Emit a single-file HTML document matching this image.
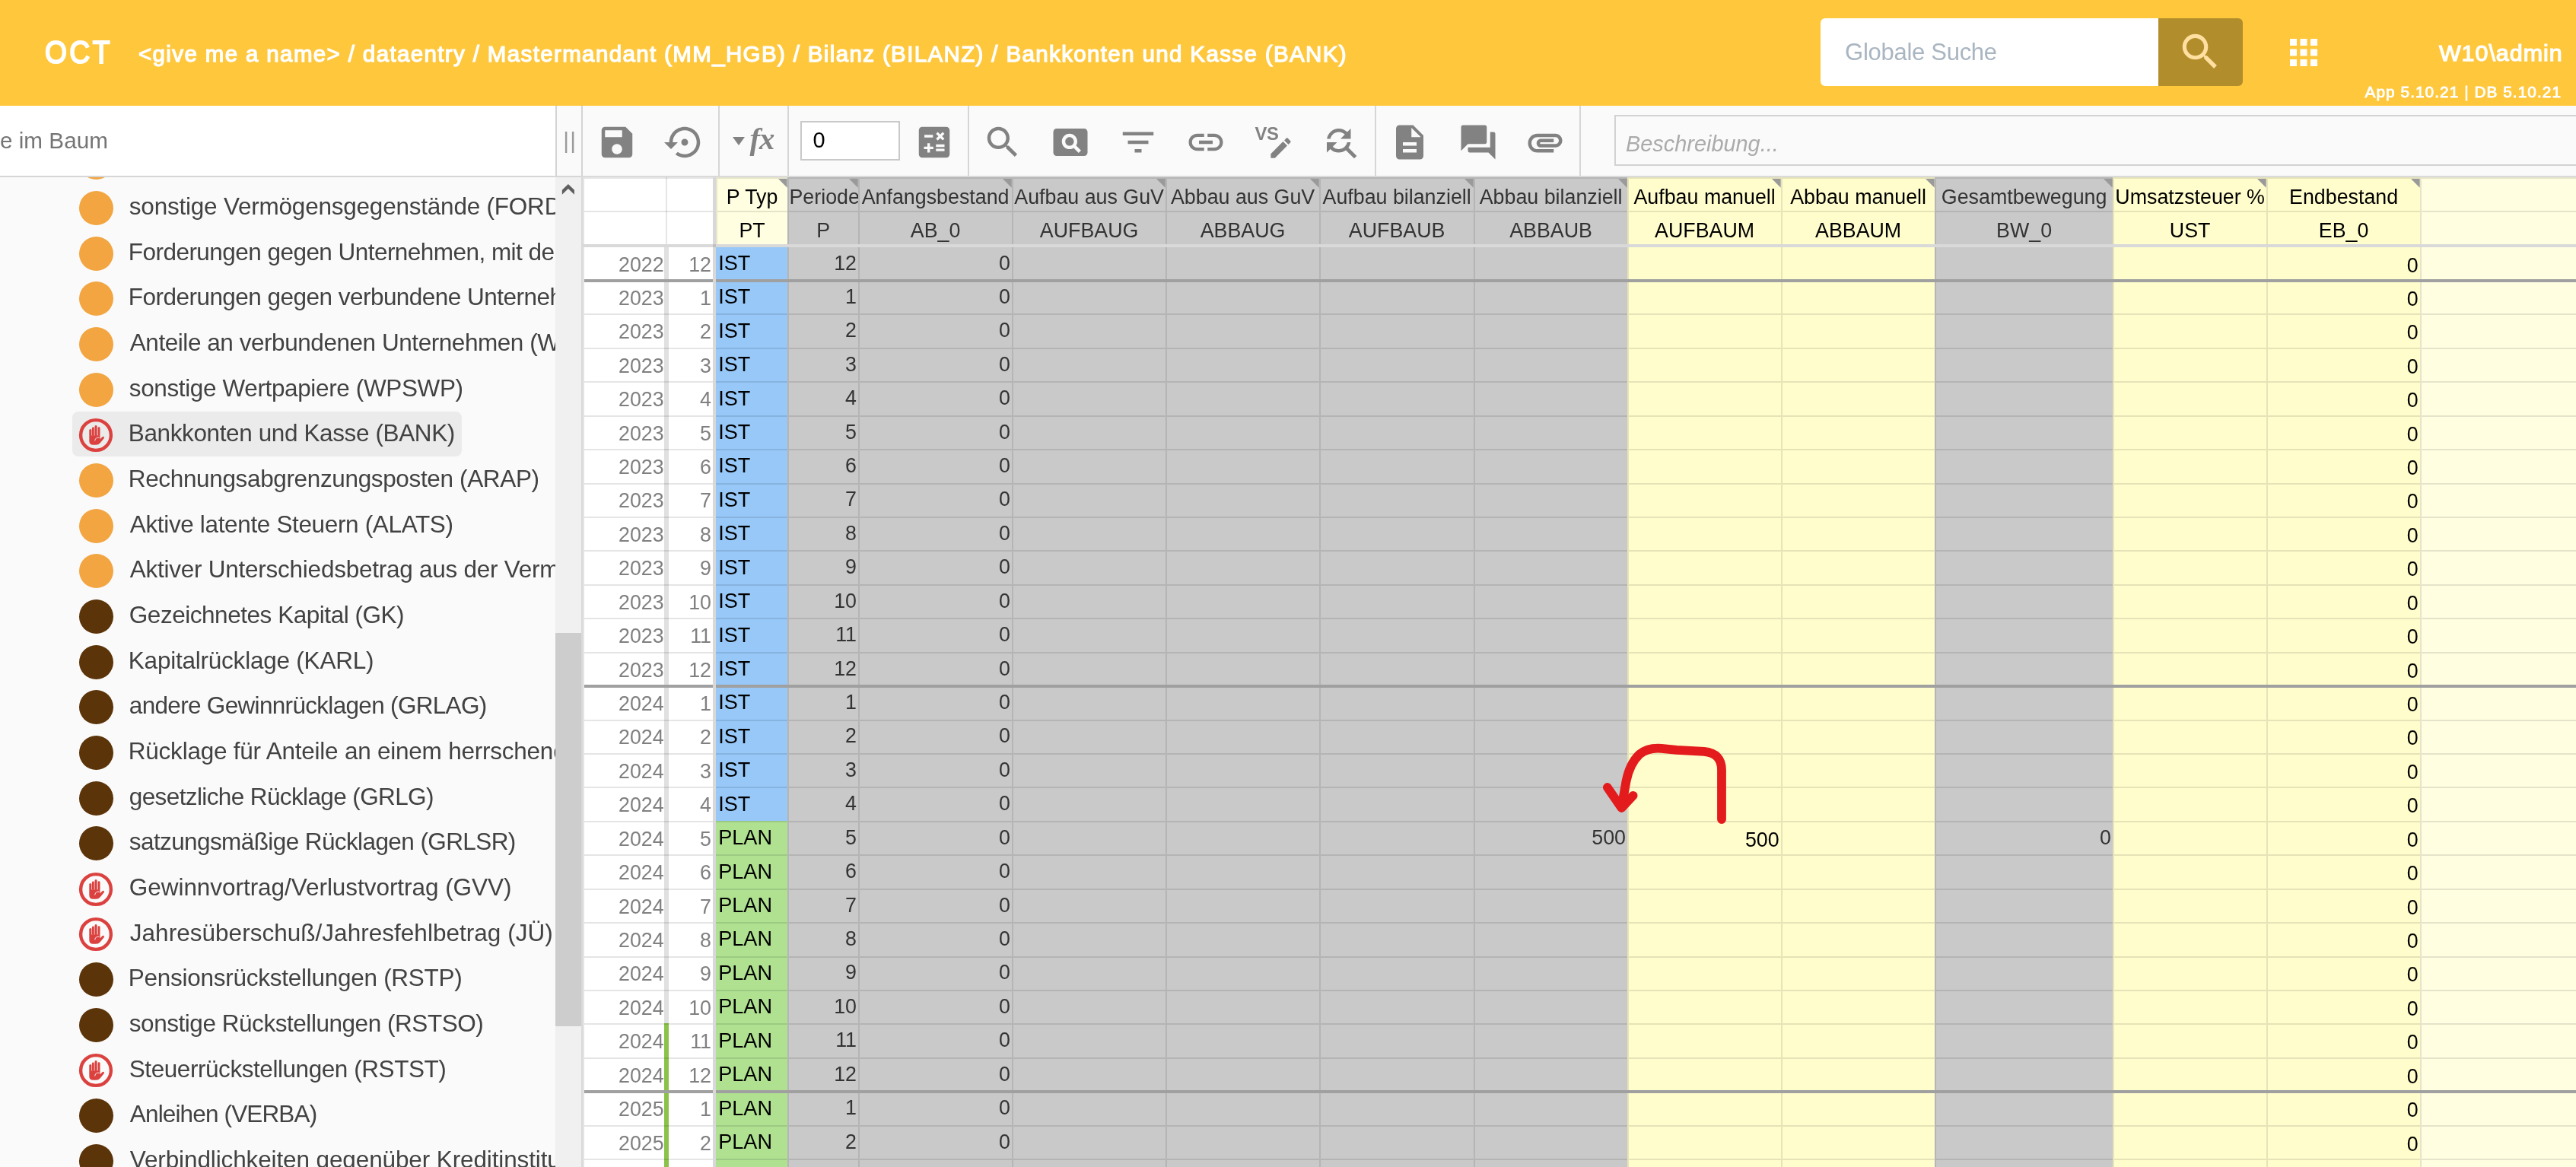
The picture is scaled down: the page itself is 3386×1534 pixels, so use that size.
<!DOCTYPE html>
<html lang="de"><head><meta charset="utf-8"><title>OCT</title>
<style>
html,body{margin:0;padding:0;}
body{width:3386px;height:1534px;overflow:hidden;position:relative;background:#FAFAFA;font-family:"Liberation Sans", sans-serif;}
.r{position:absolute;display:block;}
.t{position:absolute;white-space:nowrap;overflow:visible;}
.clip{position:absolute;overflow:hidden;}
#root{position:absolute;left:0;top:0;width:3386px;height:1534px;will-change:transform;}
</style></head><body><div id="root">
<div class="r" style="left:0.00px;top:0.00px;width:3386.00px;height:139.00px;background:#FFC73C;"></div>
<div class="t hb" style="top:40.51px;height:56px;line-height:56px;font-size:42.4px;color:#fff;letter-spacing:3.800px;left:59.00px;-webkit-text-stroke:2.1px #fff;transform:scaleX(.88);transform-origin:0 0;">OCT</div>
<div class="t hb" style="top:51.48px;height:39px;line-height:39px;font-size:29.5px;color:#fff;letter-spacing:1.365px;left:182.00px;-webkit-text-stroke:1.25px #fff;">&lt;give me a name&gt; / dataentry / Mastermandant (MM_HGB) / Bilanz (BILANZ) / Bankkonten und Kasse (BANK)</div>
<div class="r" style="left:2393.00px;top:24.00px;width:444.00px;height:89.00px;background:#fff;border-radius:6px 0 0 6px;"></div>
<div class="r" style="left:2837.00px;top:24.00px;width:111.00px;height:89.00px;background:#B28D2C;border-radius:0 6px 6px 0;"></div>
<div class="t " style="top:47.76px;height:41px;line-height:41px;font-size:31px;color:#A9B5C1;letter-spacing:-0.283px;left:2425.10px;">Globale Suche</div>
<svg class="r" style="left:2861.00px;top:36.50px" width="62" height="62" viewBox="0 0 24 24"><path fill="#FFE0A0" d="M15.5 14h-.79l-.28-.27C15.41 12.59 16 11.11 16 9.5 16 5.91 13.09 3 9.5 3S3 5.91 3 9.5 5.91 16 9.5 16c1.61 0 3.09-.59 4.23-1.57l.27.28v.79l5 4.99L20.49 19l-4.99-5zm-6 0C7.01 14 5 11.99 5 9.5S7.01 5 9.5 5 14 7.01 14 9.5 11.99 14 9.5 14z"/></svg>
<svg class="r" style="left:3001.00px;top:42.00px" width="54" height="54" viewBox="0 0 24 24"><path fill="#fff" d="M4 8h4V4H4v4zm6 12h4v-4h-4v4zm-6 0h4v-4H4v4zm0-6h4v-4H4v4zm6 0h4v-4h-4v4zm6-10v4h4V4h-4zm-6 4h4V4h-4v4zm6 6h4v-4h-4v4zm0 6h4v-4h-4v4z"/></svg>
<div class="t " style="top:49.27px;height:40px;line-height:40px;font-size:30.4px;color:#fff;letter-spacing:1.000px;right:17.40px;text-align:right;-webkit-text-stroke:1.25px #fff;">W10\admin</div>
<div class="t " style="top:107.39px;height:28px;line-height:28px;font-size:20.8px;color:#fff;letter-spacing:1.052px;right:19.00px;text-align:right;-webkit-text-stroke:0.85px #fff;">App 5.10.21 | DB 5.10.21</div>
<div class="r" style="left:0.00px;top:139.00px;width:730.00px;height:92.00px;background:#fff;"></div>
<div class="t " style="top:165.21px;height:39px;line-height:39px;font-size:29.7px;color:#757575;left:0.00px;">e im Baum</div>
<div class="r" style="left:0.00px;top:231.00px;width:730.00px;height:2.00px;background:#D6D6D6;"></div>
<div class="r" style="left:0.00px;top:233.00px;width:730.00px;height:1301.00px;background:#FAFAFA;"></div>
<div class="clip" style="left:0;top:233px;width:730px;height:1301px">
<div class="r" style="left:104.00px;top:-41.67px;width:45.00px;height:45.00px;background:#F2A541;border-radius:50%;"></div>
<div class="t tree" style="top:-41.68px;height:41px;line-height:41px;font-size:31.5px;color:#424242;letter-spacing:-0.405px;left:172.00px;"></div>
<div class="r" style="left:104.00px;top:18.00px;width:45.00px;height:45.00px;background:#F2A541;border-radius:50%;"></div>
<div class="t tree" style="top:17.99px;height:41px;line-height:41px;font-size:31.5px;color:#424242;letter-spacing:-0.220px;left:169.80px;">sonstige Vermögensgegenstände (FORDSO)</div>
<div class="r" style="left:104.00px;top:77.67px;width:45.00px;height:45.00px;background:#F2A541;border-radius:50%;"></div>
<div class="t tree" style="top:77.66px;height:41px;line-height:41px;font-size:31.5px;color:#424242;letter-spacing:-0.540px;left:168.80px;">Forderungen gegen Unternehmen, mit denen</div>
<div class="r" style="left:104.00px;top:137.34px;width:45.00px;height:45.00px;background:#F2A541;border-radius:50%;"></div>
<div class="t tree" style="top:137.33px;height:41px;line-height:41px;font-size:31.5px;color:#424242;letter-spacing:-0.530px;left:168.80px;">Forderungen gegen verbundene Unternehmen</div>
<div class="r" style="left:104.00px;top:197.01px;width:45.00px;height:45.00px;background:#F2A541;border-radius:50%;"></div>
<div class="t tree" style="top:197.00px;height:41px;line-height:41px;font-size:31.5px;color:#424242;letter-spacing:-0.450px;left:170.80px;">Anteile an verbundenen Unternehmen (WPAVU)</div>
<div class="r" style="left:104.00px;top:256.68px;width:45.00px;height:45.00px;background:#F2A541;border-radius:50%;"></div>
<div class="t tree" style="top:256.67px;height:41px;line-height:41px;font-size:31.5px;color:#424242;letter-spacing:-0.374px;left:169.80px;">sonstige Wertpapiere (WPSWP)</div>
<div class="r" style="left:95.00px;top:308.35px;width:512.00px;height:59.00px;background:#EBEBEB;border-radius:8px;"></div>
<svg class="r" style="left:102.20px;top:314.85px" width="48" height="48" viewBox="-24 -24 48 48"><circle r="19.9" fill="none" stroke="#DB423F" stroke-width="4.4"/><g fill="#DB423F"><rect x="-8.7" y="-8.0" width="3.0" height="9" rx="1.5"/><rect x="-5.1" y="-10.5" width="2.9" height="11.5" rx="1.45"/><rect x="-1.5" y="-12.9" width="3.1" height="14" rx="1.55"/><rect x="2.6" y="-10.7" width="2.9" height="11.7" rx="1.45"/><path d="M-8.7 0.2 H5.5 V5.3 L8.5 2.2 Q9.7 1.2 10.6 2.1 Q11.4 3.1 10.6 4.2 L5.7 10.2 Q3.5 12.85 0.2 12.85 H-3.6 Q-8.7 12.85 -8.7 7.6 Z"/></g><path d="M-1.3 7.1 Q-1 4 1.5 3.4 Q3 3 4.2 3.2" fill="none" stroke="#EBEBEB" stroke-width="0.9" stroke-linecap="round"/></svg>
<div class="t tree" style="top:316.34px;height:41px;line-height:41px;font-size:31.5px;color:#424242;letter-spacing:-0.384px;left:168.80px;">Bankkonten und Kasse (BANK)</div>
<div class="r" style="left:104.00px;top:376.02px;width:45.00px;height:45.00px;background:#F2A541;border-radius:50%;"></div>
<div class="t tree" style="top:376.01px;height:41px;line-height:41px;font-size:31.5px;color:#424242;letter-spacing:-0.355px;left:168.80px;">Rechnungsabgrenzungsposten (ARAP)</div>
<div class="r" style="left:104.00px;top:435.69px;width:45.00px;height:45.00px;background:#F2A541;border-radius:50%;"></div>
<div class="t tree" style="top:435.68px;height:41px;line-height:41px;font-size:31.5px;color:#424242;letter-spacing:-0.351px;left:170.80px;">Aktive latente Steuern (ALATS)</div>
<div class="r" style="left:104.00px;top:495.36px;width:45.00px;height:45.00px;background:#F2A541;border-radius:50%;"></div>
<div class="t tree" style="top:495.35px;height:41px;line-height:41px;font-size:31.5px;color:#424242;letter-spacing:-0.250px;left:170.80px;">Aktiver Unterschiedsbetrag aus der Vermögensverrechnung</div>
<div class="r" style="left:104.00px;top:555.03px;width:45.00px;height:45.00px;background:#5B3409;border-radius:50%;"></div>
<div class="t tree" style="top:555.02px;height:41px;line-height:41px;font-size:31.5px;color:#424242;letter-spacing:-0.463px;left:169.80px;">Gezeichnetes Kapital (GK)</div>
<div class="r" style="left:104.00px;top:614.70px;width:45.00px;height:45.00px;background:#5B3409;border-radius:50%;"></div>
<div class="t tree" style="top:614.69px;height:41px;line-height:41px;font-size:31.5px;color:#424242;letter-spacing:-0.225px;left:168.80px;">Kapitalrücklage (KARL)</div>
<div class="r" style="left:104.00px;top:674.37px;width:45.00px;height:45.00px;background:#5B3409;border-radius:50%;"></div>
<div class="t tree" style="top:674.36px;height:41px;line-height:41px;font-size:31.5px;color:#424242;letter-spacing:-0.682px;left:169.80px;">andere Gewinnrücklagen (GRLAG)</div>
<div class="r" style="left:104.00px;top:734.04px;width:45.00px;height:45.00px;background:#5B3409;border-radius:50%;"></div>
<div class="t tree" style="top:734.03px;height:41px;line-height:41px;font-size:31.5px;color:#424242;letter-spacing:-0.230px;left:168.80px;">Rücklage für Anteile an einem herrschenden</div>
<div class="r" style="left:104.00px;top:793.71px;width:45.00px;height:45.00px;background:#5B3409;border-radius:50%;"></div>
<div class="t tree" style="top:793.70px;height:41px;line-height:41px;font-size:31.5px;color:#424242;letter-spacing:-0.615px;left:169.80px;">gesetzliche Rücklage (GRLG)</div>
<div class="r" style="left:104.00px;top:853.38px;width:45.00px;height:45.00px;background:#5B3409;border-radius:50%;"></div>
<div class="t tree" style="top:853.37px;height:41px;line-height:41px;font-size:31.5px;color:#424242;letter-spacing:-0.595px;left:169.80px;">satzungsmäßige Rücklagen (GRLSR)</div>
<svg class="r" style="left:102.20px;top:911.55px" width="48" height="48" viewBox="-24 -24 48 48"><circle r="19.9" fill="none" stroke="#DB423F" stroke-width="4.4"/><g fill="#DB423F"><rect x="-8.7" y="-8.0" width="3.0" height="9" rx="1.5"/><rect x="-5.1" y="-10.5" width="2.9" height="11.5" rx="1.45"/><rect x="-1.5" y="-12.9" width="3.1" height="14" rx="1.55"/><rect x="2.6" y="-10.7" width="2.9" height="11.7" rx="1.45"/><path d="M-8.7 0.2 H5.5 V5.3 L8.5 2.2 Q9.7 1.2 10.6 2.1 Q11.4 3.1 10.6 4.2 L5.7 10.2 Q3.5 12.85 0.2 12.85 H-3.6 Q-8.7 12.85 -8.7 7.6 Z"/></g><path d="M-1.3 7.1 Q-1 4 1.5 3.4 Q3 3 4.2 3.2" fill="none" stroke="#FAFAFA" stroke-width="0.9" stroke-linecap="round"/></svg>
<div class="t tree" style="top:913.04px;height:41px;line-height:41px;font-size:31.5px;color:#424242;letter-spacing:-0.045px;left:169.80px;">Gewinnvortrag/Verlustvortrag (GVV)</div>
<svg class="r" style="left:102.20px;top:971.22px" width="48" height="48" viewBox="-24 -24 48 48"><circle r="19.9" fill="none" stroke="#DB423F" stroke-width="4.4"/><g fill="#DB423F"><rect x="-8.7" y="-8.0" width="3.0" height="9" rx="1.5"/><rect x="-5.1" y="-10.5" width="2.9" height="11.5" rx="1.45"/><rect x="-1.5" y="-12.9" width="3.1" height="14" rx="1.55"/><rect x="2.6" y="-10.7" width="2.9" height="11.7" rx="1.45"/><path d="M-8.7 0.2 H5.5 V5.3 L8.5 2.2 Q9.7 1.2 10.6 2.1 Q11.4 3.1 10.6 4.2 L5.7 10.2 Q3.5 12.85 0.2 12.85 H-3.6 Q-8.7 12.85 -8.7 7.6 Z"/></g><path d="M-1.3 7.1 Q-1 4 1.5 3.4 Q3 3 4.2 3.2" fill="none" stroke="#FAFAFA" stroke-width="0.9" stroke-linecap="round"/></svg>
<div class="t tree" style="top:972.71px;height:41px;line-height:41px;font-size:31.5px;color:#424242;letter-spacing:0.026px;left:170.80px;">Jahresüberschuß/Jahresfehlbetrag (JÜ)</div>
<div class="r" style="left:104.00px;top:1032.39px;width:45.00px;height:45.00px;background:#5B3409;border-radius:50%;"></div>
<div class="t tree" style="top:1032.38px;height:41px;line-height:41px;font-size:31.5px;color:#424242;letter-spacing:-0.266px;left:168.80px;">Pensionsrückstellungen (RSTP)</div>
<div class="r" style="left:104.00px;top:1092.06px;width:45.00px;height:45.00px;background:#5B3409;border-radius:50%;"></div>
<div class="t tree" style="top:1092.05px;height:41px;line-height:41px;font-size:31.5px;color:#424242;letter-spacing:-0.457px;left:169.80px;">sonstige Rückstellungen (RSTSO)</div>
<svg class="r" style="left:102.20px;top:1150.23px" width="48" height="48" viewBox="-24 -24 48 48"><circle r="19.9" fill="none" stroke="#DB423F" stroke-width="4.4"/><g fill="#DB423F"><rect x="-8.7" y="-8.0" width="3.0" height="9" rx="1.5"/><rect x="-5.1" y="-10.5" width="2.9" height="11.5" rx="1.45"/><rect x="-1.5" y="-12.9" width="3.1" height="14" rx="1.55"/><rect x="2.6" y="-10.7" width="2.9" height="11.7" rx="1.45"/><path d="M-8.7 0.2 H5.5 V5.3 L8.5 2.2 Q9.7 1.2 10.6 2.1 Q11.4 3.1 10.6 4.2 L5.7 10.2 Q3.5 12.85 0.2 12.85 H-3.6 Q-8.7 12.85 -8.7 7.6 Z"/></g><path d="M-1.3 7.1 Q-1 4 1.5 3.4 Q3 3 4.2 3.2" fill="none" stroke="#FAFAFA" stroke-width="0.9" stroke-linecap="round"/></svg>
<div class="t tree" style="top:1151.72px;height:41px;line-height:41px;font-size:31.5px;color:#424242;letter-spacing:-0.441px;left:169.80px;">Steuerrückstellungen (RSTST)</div>
<div class="r" style="left:104.00px;top:1211.40px;width:45.00px;height:45.00px;background:#5B3409;border-radius:50%;"></div>
<div class="t tree" style="top:1211.39px;height:41px;line-height:41px;font-size:31.5px;color:#424242;letter-spacing:-0.850px;left:170.80px;">Anleihen (VERBA)</div>
<div class="r" style="left:104.00px;top:1271.07px;width:45.00px;height:45.00px;background:#5B3409;border-radius:50%;"></div>
<div class="t tree" style="top:1271.06px;height:41px;line-height:41px;font-size:31.5px;color:#424242;letter-spacing:-0.120px;left:170.80px;">Verbindlichkeiten gegenüber Kreditinstituten</div>
</div>
<div class="r" style="left:730.00px;top:139.00px;width:2.00px;height:92.00px;background:#D4D4D4;"></div>
<div class="r" style="left:732.00px;top:139.00px;width:32.00px;height:92.00px;background:#FAFAFA;"></div>
<div class="t" style="left:740.2px;top:160.4px;font-size:29.8px;line-height:50px;height:50px;color:#9A9A9A;letter-spacing:1.3px">||</div>
<div class="r" style="left:730.00px;top:233.00px;width:34.00px;height:1301.00px;background:#F0F0F0;"></div>
<div class="r" style="left:730.00px;top:832.00px;width:34.00px;height:517.00px;background:#CDCDCD;"></div>
<svg class="r" style="left:730px;top:233px" width="34" height="34" viewBox="730 233 34 34"><path d="M738.85 249.85 L746.9 241.9 L754.9 249.85 V255.85 L746.9 247.9 L738.85 255.85Z" fill="#5E5E5E"/></svg>
<div class="r" style="left:764.00px;top:139.00px;width:2.00px;height:92.00px;background:#D4D4D4;"></div>
<div class="r" style="left:730.00px;top:231.00px;width:36.00px;height:2.00px;background:#D6D6D6;"></div>
<div class="r" style="left:764.00px;top:233.00px;width:2.00px;height:1301.00px;background:#D9D9D9;"></div>
<div class="r" style="left:766.00px;top:233.00px;width:2.00px;height:1301.00px;background:#E4E4E4;"></div>
<div class="r" style="left:766.00px;top:139.00px;width:2620.00px;height:92.00px;background:#FAFAFA;"></div>
<div class="r" style="left:943.70px;top:139.00px;width:2.00px;height:92.00px;background:#D6D6D6;"></div>
<div class="r" style="left:1034.80px;top:139.00px;width:2.00px;height:92.00px;background:#D6D6D6;"></div>
<div class="r" style="left:1271.70px;top:139.00px;width:2.00px;height:92.00px;background:#D6D6D6;"></div>
<div class="r" style="left:1806.70px;top:139.00px;width:2.00px;height:92.00px;background:#D6D6D6;"></div>
<div class="r" style="left:2076.10px;top:139.00px;width:2.00px;height:92.00px;background:#D6D6D6;"></div>
<svg class="r" style="left:783.50px;top:160.00px" width="54" height="54" viewBox="0 0 24 24"><path fill="#828282" d="M17 3H5c-1.11 0-2 .9-2 2v14c0 1.1.89 2 2 2h14c1.1 0 2-.9 2-2V7l-4-4zm-5 16c-1.66 0-3-1.34-3-3s1.34-3 3-3 3 1.34 3 3-1.34 3-3 3zm3-10H5V5h10v4z"/></svg>
<svg class="r" style="left:873.40px;top:160.00px" width="54" height="54" viewBox="0 0 24 24"><path fill="#828282" d="M14 12c0-1.1-.9-2-2-2s-2 .9-2 2 .9 2 2 2 2-.9 2-2zm-2-9c-4.97 0-9 4.03-9 9H0l4 4 4-4H5c0-3.87 3.13-7 7-7s7 3.13 7 7-3.13 7-7 7c-1.51 0-2.91-.49-4.06-1.3l-1.42 1.44C8.04 20.3 9.94 21 12 21c4.97 0 9-4.03 9-9s-4.03-9-9-9z"/></svg>
<svg class="r" style="left:962.9px;top:180px" width="16" height="11" viewBox="0 0 16 11"><path d="M0 0H16L8 11Z" fill="#828282"/></svg>
<div class="t fx" style="top:156.06px;height:53px;line-height:53px;font-size:40.7px;color:#828282;font-weight:700;font-style:italic;letter-spacing:-1.000px;font-family:'Liberation Serif',serif;left:985.50px;">fx</div>
<div class="r" style="left:1052.00px;top:159.00px;width:131.00px;height:52.00px;background:#fff;box-sizing:border-box;border:2px solid #C9C9C9;"></div>
<div class="t " style="top:165.45px;height:38px;line-height:38px;font-size:29px;color:#000;left:1068.50px;">0</div>
<svg class="r" style="left:1200.50px;top:160.00px" width="54" height="54" viewBox="0 0 24 24"><path fill="#828282" d="M19 3H5c-1.1 0-2 .9-2 2v14c0 1.1.9 2 2 2h14c1.1 0 2-.9 2-2V5c0-1.1-.9-2-2-2zm-5.97 4.06L14.09 6l1.41 1.41L16.91 6l1.06 1.06-1.41 1.41 1.41 1.41-1.06 1.06-1.41-1.4-1.41 1.41-1.06-1.06 1.41-1.41-1.41-1.42zm-6.78.66h5v1.5h-5v-1.5zM11.5 16h-2v2H8v-2H6v-1.5h2v-2h1.5v2h2V16zm6.5 1.25h-5v-1.5h5v1.5zm0-2.5h-5v-1.5h5v1.5z"/></svg>
<svg class="r" style="left:1291.00px;top:160.00px" width="54" height="54" viewBox="0 0 24 24"><path fill="#828282" d="M15.5 14h-.79l-.28-.27C15.41 12.59 16 11.11 16 9.5 16 5.91 13.09 3 9.5 3S3 5.91 3 9.5 5.91 16 9.5 16c1.61 0 3.09-.59 4.23-1.57l.27.28v.79l5 4.99L20.49 19l-4.99-5zm-6 0C7.01 14 5 11.99 5 9.5S7.01 5 9.5 5 14 7.01 14 9.5 11.99 14 9.5 14z"/></svg>
<svg class="r" style="left:1380.00px;top:160.00px" width="54" height="54" viewBox="0 0 24 24"><path fill="#828282" d="M11.5 9C10.12 9 9 10.12 9 11.5s1.12 2.5 2.5 2.5 2.5-1.12 2.5-2.5S12.88 9 11.5 9zM20 4H4c-1.1 0-2 .9-2 2v12c0 1.1.9 2 2 2h16c1.1 0 2-.9 2-2V6c0-1.1-.9-2-2-2zm-3.21 14.21l-2.91-2.91c-.69.44-1.51.7-2.39.7C9.01 16 7 13.99 7 11.5S9.01 7 11.5 7 16 9.01 16 11.5c0 .88-.26 1.69-.7 2.39l2.91 2.9-1.42 1.42z"/></svg>
<svg class="r" style="left:1469.00px;top:160.00px" width="54" height="54" viewBox="0 0 24 24"><path fill="#828282" d="M10 18h4v-2h-4v2zM3 6v2h18V6H3zm3 7h12v-2H6v2z"/></svg>
<svg class="r" style="left:1557.50px;top:160.00px" width="54" height="54" viewBox="0 0 24 24"><path fill="#828282" d="M3.9 12c0-1.71 1.39-3.1 3.1-3.1h4V7H7c-2.76 0-5 2.24-5 5s2.24 5 5 5h4v-1.9H7c-1.71 0-3.1-1.39-3.1-3.1zM8 13h8v-2H8v2zm9-6h-4v1.9h4c1.71 0 3.1 1.39 3.1 3.1s-1.39 3.1-3.1 3.1h-4V17h4c2.76 0 5-2.24 5-5s-2.24-5-5-5z"/></svg>
<div class="t vs" style="top:160.05px;height:31px;line-height:31px;font-size:23.8px;color:#828282;font-weight:700;letter-spacing:-0.200px;left:1649.40px;">VS</div>
<svg class="r" style="left:1665.50px;top:176.70px" width="35" height="35" viewBox="0 0 24 24"><path fill="#828282" d="M3 17.25V21h3.75L17.81 9.94l-3.75-3.75L3 17.25zM20.71 7.04c.39-.39.39-1.02 0-1.41l-2.34-2.34c-.39-.39-1.02-.39-1.41 0l-1.83 1.83 3.75 3.75 1.83-1.83z"/></svg>
<svg class="r" style="left:1735.30px;top:159.70px" width="54" height="54" viewBox="0 0 24 24"><path fill="#828282" d="M11 6c1.38 0 2.63.56 3.54 1.46L12 10h6V4l-2.05 2.05C14.68 4.78 12.93 4 11 4c-3.53 0-6.43 2.61-6.92 6H6.1c.46-2.28 2.48-4 4.9-4zm5.64 9.14c.66-.9 1.12-1.97 1.28-3.14H15.9c-.46 2.28-2.48 4-4.9 4-1.38 0-2.63-.56-3.54-1.46L10 12H4v6l2.05-2.05C7.32 17.22 9.07 18 11 18c1.55 0 2.98-.51 4.14-1.36L20 21.49 21.49 20l-4.85-4.86z"/></svg>
<svg class="r" style="left:1826.40px;top:160.00px" width="54" height="54" viewBox="0 0 24 24"><path fill="#828282" d="M14 2H6c-1.1 0-1.99.9-1.99 2L4 20c0 1.1.89 2 1.99 2H18c1.1 0 2-.9 2-2V8l-6-6zm2 16H8v-2h8v2zm0-4H8v-2h8v2zm-3-5V3.5L18.5 9H13z"/></svg>
<svg class="r" style="left:1915.60px;top:160.00px" width="54" height="54" viewBox="0 0 24 24"><path fill="#828282" d="M21 6h-2v9H6v2c0 .55.45 1 1 1h11l4 4V7c0-.55-.45-1-1-1zm-4 6V3c0-.55-.45-1-1-1H3c-.55 0-1 .45-1 1v14l4-4h10c.55 0 1-.45 1-1z"/></svg>
<svg class="r" style="left:2004.40px;top:159.80px" width="54" height="54" viewBox="0 0 24 24"><path fill="#828282" d="M2 12.5C2 9.46 4.46 7 7.5 7H18c2.21 0 4 1.79 4 4s-1.79 4-4 4H9.5C8.12 15 7 13.88 7 12.5S8.12 10 9.5 10H17v2H9.41c-.55 0-.55 1 0 1H18c1.1 0 2-.9 2-2s-.9-2-2-2H7.5C5.57 9 4 10.57 4 12.5S5.57 16 7.5 16H17v2H7.5C4.46 18 2 15.54 2 12.5z"/></svg>
<div class="r" style="left:2122.00px;top:151.00px;width:1274.00px;height:67.00px;background:#FAFAFA;box-sizing:border-box;border:2px solid #D2D2D2;"></div>
<div class="t besch" style="top:169.59px;height:38px;line-height:38px;font-size:28.9px;color:#ABABAB;font-style:italic;letter-spacing:0.000px;left:2137.00px;">Beschreibung...</div>
<div class="r" style="left:768.00px;top:231.00px;width:2618.00px;height:1303.00px;background:#fff;"></div>
<div class="r" style="left:764.00px;top:231.00px;width:2622.00px;height:2.00px;background:#DADADA;"></div>
<div class="r" style="left:941.00px;top:233.00px;width:94.00px;height:88.00px;background:#FFFEE1;"></div>
<div class="r" style="left:1035.00px;top:233.00px;width:93.00px;height:88.00px;background:#C9C9C9;"></div>
<div class="r" style="left:1128.00px;top:233.00px;width:202.00px;height:88.00px;background:#C9C9C9;"></div>
<div class="r" style="left:1330.00px;top:233.00px;width:202.00px;height:88.00px;background:#C9C9C9;"></div>
<div class="r" style="left:1532.00px;top:233.00px;width:202.00px;height:88.00px;background:#C9C9C9;"></div>
<div class="r" style="left:1734.00px;top:233.00px;width:203.00px;height:88.00px;background:#C9C9C9;"></div>
<div class="r" style="left:1937.00px;top:233.00px;width:202.00px;height:88.00px;background:#C9C9C9;"></div>
<div class="r" style="left:2139.00px;top:233.00px;width:202.00px;height:88.00px;background:#FFFDCC;"></div>
<div class="r" style="left:2341.00px;top:233.00px;width:202.00px;height:88.00px;background:#FFFDCC;"></div>
<div class="r" style="left:2543.00px;top:233.00px;width:234.00px;height:88.00px;background:#C9C9C9;"></div>
<div class="r" style="left:2777.00px;top:233.00px;width:202.00px;height:88.00px;background:#FFFDCC;"></div>
<div class="r" style="left:2979.00px;top:233.00px;width:202.00px;height:88.00px;background:#FFFDCC;"></div>
<div class="r" style="left:3181.00px;top:233.00px;width:205.00px;height:88.00px;background:#FFFEE1;"></div>
<div class="r" style="left:941.00px;top:325.00px;width:94.00px;height:754.00px;background:#97C8F8;"></div>
<div class="r" style="left:941.00px;top:1079.00px;width:94.00px;height:455.00px;background:#AFE191;"></div>
<div class="r" style="left:1035.00px;top:325.00px;width:93.00px;height:1209.00px;background:#C9C9C9;"></div>
<div class="r" style="left:1128.00px;top:325.00px;width:202.00px;height:1209.00px;background:#C9C9C9;"></div>
<div class="r" style="left:1330.00px;top:325.00px;width:202.00px;height:1209.00px;background:#C9C9C9;"></div>
<div class="r" style="left:1532.00px;top:325.00px;width:202.00px;height:1209.00px;background:#C9C9C9;"></div>
<div class="r" style="left:1734.00px;top:325.00px;width:203.00px;height:1209.00px;background:#C9C9C9;"></div>
<div class="r" style="left:1937.00px;top:325.00px;width:202.00px;height:1209.00px;background:#C9C9C9;"></div>
<div class="r" style="left:2139.00px;top:325.00px;width:202.00px;height:1209.00px;background:#FFFDCC;"></div>
<div class="r" style="left:2341.00px;top:325.00px;width:202.00px;height:1209.00px;background:#FFFDCC;"></div>
<div class="r" style="left:2543.00px;top:325.00px;width:234.00px;height:1209.00px;background:#C9C9C9;"></div>
<div class="r" style="left:2777.00px;top:325.00px;width:202.00px;height:1209.00px;background:#FFFDCC;"></div>
<div class="r" style="left:2979.00px;top:325.00px;width:202.00px;height:1209.00px;background:#FFFDCC;"></div>
<div class="r" style="left:3181.00px;top:325.00px;width:205.00px;height:1209.00px;background:#FFFEE1;"></div>
<div class="r" style="left:875.00px;top:233.00px;width:2.00px;height:88.00px;background:#E6E6E6;"></div>
<div class="r" style="left:873.00px;top:325.00px;width:6.00px;height:1209.00px;background:#E0E0E0;"></div>
<div class="r" style="left:873.00px;top:1345.00px;width:6.00px;height:189.00px;background:#8BC34A;"></div>
<div class="r" style="left:768.00px;top:233.00px;width:2618.00px;height:2.00px;background:rgba(0,0,0,0.1);"></div>
<div class="r" style="left:768.00px;top:277.00px;width:2618.00px;height:2.00px;background:rgba(0,0,0,0.1);"></div>
<div class="r" style="left:768.00px;top:412.00px;width:2618.00px;height:2.00px;background:rgba(0,0,0,0.1);"></div>
<div class="r" style="left:768.00px;top:457.00px;width:2618.00px;height:2.00px;background:rgba(0,0,0,0.1);"></div>
<div class="r" style="left:768.00px;top:501.00px;width:2618.00px;height:2.00px;background:rgba(0,0,0,0.1);"></div>
<div class="r" style="left:768.00px;top:546.00px;width:2618.00px;height:2.00px;background:rgba(0,0,0,0.1);"></div>
<div class="r" style="left:768.00px;top:590.00px;width:2618.00px;height:2.00px;background:rgba(0,0,0,0.1);"></div>
<div class="r" style="left:768.00px;top:635.00px;width:2618.00px;height:2.00px;background:rgba(0,0,0,0.1);"></div>
<div class="r" style="left:768.00px;top:679.00px;width:2618.00px;height:2.00px;background:rgba(0,0,0,0.1);"></div>
<div class="r" style="left:768.00px;top:723.00px;width:2618.00px;height:2.00px;background:rgba(0,0,0,0.1);"></div>
<div class="r" style="left:768.00px;top:768.00px;width:2618.00px;height:2.00px;background:rgba(0,0,0,0.1);"></div>
<div class="r" style="left:768.00px;top:812.00px;width:2618.00px;height:2.00px;background:rgba(0,0,0,0.1);"></div>
<div class="r" style="left:768.00px;top:857.00px;width:2618.00px;height:2.00px;background:rgba(0,0,0,0.1);"></div>
<div class="r" style="left:768.00px;top:946.00px;width:2618.00px;height:2.00px;background:rgba(0,0,0,0.1);"></div>
<div class="r" style="left:768.00px;top:990.00px;width:2618.00px;height:2.00px;background:rgba(0,0,0,0.1);"></div>
<div class="r" style="left:768.00px;top:1034.00px;width:2618.00px;height:2.00px;background:rgba(0,0,0,0.1);"></div>
<div class="r" style="left:768.00px;top:1079.00px;width:2618.00px;height:2.00px;background:rgba(0,0,0,0.1);"></div>
<div class="r" style="left:768.00px;top:1123.00px;width:2618.00px;height:2.00px;background:rgba(0,0,0,0.1);"></div>
<div class="r" style="left:768.00px;top:1168.00px;width:2618.00px;height:2.00px;background:rgba(0,0,0,0.1);"></div>
<div class="r" style="left:768.00px;top:1212.00px;width:2618.00px;height:2.00px;background:rgba(0,0,0,0.1);"></div>
<div class="r" style="left:768.00px;top:1257.00px;width:2618.00px;height:2.00px;background:rgba(0,0,0,0.1);"></div>
<div class="r" style="left:768.00px;top:1301.00px;width:2618.00px;height:2.00px;background:rgba(0,0,0,0.1);"></div>
<div class="r" style="left:768.00px;top:1345.00px;width:2618.00px;height:2.00px;background:rgba(0,0,0,0.1);"></div>
<div class="r" style="left:768.00px;top:1390.00px;width:2618.00px;height:2.00px;background:rgba(0,0,0,0.1);"></div>
<div class="r" style="left:768.00px;top:1479.00px;width:2618.00px;height:2.00px;background:rgba(0,0,0,0.1);"></div>
<div class="r" style="left:768.00px;top:1523.00px;width:2618.00px;height:2.00px;background:rgba(0,0,0,0.1);"></div>
<div class="r" style="left:768.00px;top:1568.00px;width:2618.00px;height:2.00px;background:rgba(0,0,0,0.1);"></div>
<div class="r" style="left:1035.00px;top:233.00px;width:2.00px;height:1301.00px;background:#B5B5B5;"></div>
<div class="r" style="left:1128.00px;top:233.00px;width:2.00px;height:1301.00px;background:#B5B5B5;"></div>
<div class="r" style="left:1330.00px;top:233.00px;width:2.00px;height:1301.00px;background:#B5B5B5;"></div>
<div class="r" style="left:1532.00px;top:233.00px;width:2.00px;height:1301.00px;background:#B5B5B5;"></div>
<div class="r" style="left:1734.00px;top:233.00px;width:2.00px;height:1301.00px;background:#B5B5B5;"></div>
<div class="r" style="left:1937.00px;top:233.00px;width:2.00px;height:1301.00px;background:#B5B5B5;"></div>
<div class="r" style="left:2139.00px;top:233.00px;width:2.00px;height:1301.00px;background:#E6E4B8;"></div>
<div class="r" style="left:2341.00px;top:233.00px;width:2.00px;height:1301.00px;background:#E6E4B8;"></div>
<div class="r" style="left:2543.00px;top:233.00px;width:2.00px;height:1301.00px;background:#B5B5B5;"></div>
<div class="r" style="left:2777.00px;top:233.00px;width:2.00px;height:1301.00px;background:#E6E4B8;"></div>
<div class="r" style="left:2979.00px;top:233.00px;width:2.00px;height:1301.00px;background:#E6E4B8;"></div>
<div class="r" style="left:3181.00px;top:233.00px;width:2.00px;height:1301.00px;background:#E6E5CA;"></div>
<div class="r" style="left:941.00px;top:233.00px;width:2.00px;height:88.00px;background:#E6E5CA;"></div>
<div class="r" style="left:764.00px;top:321.00px;width:2622.00px;height:4.00px;background:#D9D9D9;"></div>
<div class="r" style="left:768.00px;top:367.00px;width:2618.00px;height:4.00px;background:#A0A0A0;"></div>
<div class="r" style="left:768.00px;top:1433.00px;width:2618.00px;height:4.00px;background:#A0A0A0;"></div>
<div class="r" style="left:768.00px;top:900.00px;width:2618.00px;height:4.00px;background:#A0A0A0;"></div>
<div class="r" style="left:937.00px;top:233.00px;width:4.00px;height:1301.00px;background:#D8D8D8;"></div>
<div class="r" style="left:937.00px;top:321.00px;width:4.00px;height:4.00px;background:#C0C0C0;"></div>
<svg class="r" style="left:1023.3px;top:235px" width="11.7" height="11.7" viewBox="0 0 12 12"><path d="M0 0H12V12Z" fill="#9A9A9A"/></svg>
<svg class="r" style="left:1116.3px;top:235px" width="11.7" height="11.7" viewBox="0 0 12 12"><path d="M0 0H12V12Z" fill="#9A9A9A"/></svg>
<svg class="r" style="left:1318.3px;top:235px" width="11.7" height="11.7" viewBox="0 0 12 12"><path d="M0 0H12V12Z" fill="#9A9A9A"/></svg>
<svg class="r" style="left:1520.3px;top:235px" width="11.7" height="11.7" viewBox="0 0 12 12"><path d="M0 0H12V12Z" fill="#9A9A9A"/></svg>
<svg class="r" style="left:1722.3px;top:235px" width="11.7" height="11.7" viewBox="0 0 12 12"><path d="M0 0H12V12Z" fill="#9A9A9A"/></svg>
<svg class="r" style="left:1925.3px;top:235px" width="11.7" height="11.7" viewBox="0 0 12 12"><path d="M0 0H12V12Z" fill="#9A9A9A"/></svg>
<svg class="r" style="left:2127.3px;top:235px" width="11.7" height="11.7" viewBox="0 0 12 12"><path d="M0 0H12V12Z" fill="#9A9A9A"/></svg>
<svg class="r" style="left:2329.3px;top:235px" width="11.7" height="11.7" viewBox="0 0 12 12"><path d="M0 0H12V12Z" fill="#9A9A9A"/></svg>
<svg class="r" style="left:2531.3px;top:235px" width="11.7" height="11.7" viewBox="0 0 12 12"><path d="M0 0H12V12Z" fill="#9A9A9A"/></svg>
<svg class="r" style="left:2765.3px;top:235px" width="11.7" height="11.7" viewBox="0 0 12 12"><path d="M0 0H12V12Z" fill="#9A9A9A"/></svg>
<svg class="r" style="left:2967.3px;top:235px" width="11.7" height="11.7" viewBox="0 0 12 12"><path d="M0 0H12V12Z" fill="#9A9A9A"/></svg>
<svg class="r" style="left:3169.3px;top:235px" width="11.7" height="11.7" viewBox="0 0 12 12"><path d="M0 0H12V12Z" fill="#9A9A9A"/></svg>
<div class="clip" style="left:943px;top:233px;width:92px;height:88px">
<div class="t hd" style="left:-100.4px;width:292px;text-align:center;top:8.71px;height:34px;line-height:34px;font-size:26.8px;color:#000">P Typ</div>
<div class="t hd" style="left:-100.4px;width:292px;text-align:center;top:52.56px;height:34px;line-height:34px;font-size:26.8px;color:#000">PT</div>
</div>
<div class="clip" style="left:1037px;top:233px;width:91px;height:88px">
<div class="t hd" style="left:0.5px;top:8.71px;height:34px;line-height:34px;font-size:26.8px;color:#333">Periode</div>
<div class="t hd" style="left:-100.4px;width:291px;text-align:center;top:52.56px;height:34px;line-height:34px;font-size:26.8px;color:#333">P</div>
</div>
<div class="clip" style="left:1130px;top:233px;width:200px;height:88px">
<div class="t hd" style="left:-100.4px;width:400px;text-align:center;top:8.71px;height:34px;line-height:34px;font-size:26.8px;color:#333">Anfangsbestand</div>
<div class="t hd" style="left:-100.4px;width:400px;text-align:center;top:52.56px;height:34px;line-height:34px;font-size:26.8px;color:#333">AB_0</div>
</div>
<div class="clip" style="left:1332px;top:233px;width:200px;height:88px">
<div class="t hd" style="left:-100.4px;width:400px;text-align:center;top:8.71px;height:34px;line-height:34px;font-size:26.8px;color:#333">Aufbau aus GuV</div>
<div class="t hd" style="left:-100.4px;width:400px;text-align:center;top:52.56px;height:34px;line-height:34px;font-size:26.8px;color:#333">AUFBAUG</div>
</div>
<div class="clip" style="left:1534px;top:233px;width:200px;height:88px">
<div class="t hd" style="left:-100.4px;width:400px;text-align:center;top:8.71px;height:34px;line-height:34px;font-size:26.8px;color:#333">Abbau aus GuV</div>
<div class="t hd" style="left:-100.4px;width:400px;text-align:center;top:52.56px;height:34px;line-height:34px;font-size:26.8px;color:#333">ABBAUG</div>
</div>
<div class="clip" style="left:1736px;top:233px;width:201px;height:88px">
<div class="t hd" style="left:-100.4px;width:401px;text-align:center;top:8.71px;height:34px;line-height:34px;font-size:26.8px;color:#333">Aufbau bilanziell</div>
<div class="t hd" style="left:-100.4px;width:401px;text-align:center;top:52.56px;height:34px;line-height:34px;font-size:26.8px;color:#333">AUFBAUB</div>
</div>
<div class="clip" style="left:1939px;top:233px;width:200px;height:88px">
<div class="t hd" style="left:-100.4px;width:400px;text-align:center;top:8.71px;height:34px;line-height:34px;font-size:26.8px;color:#333">Abbau bilanziell</div>
<div class="t hd" style="left:-100.4px;width:400px;text-align:center;top:52.56px;height:34px;line-height:34px;font-size:26.8px;color:#333">ABBAUB</div>
</div>
<div class="clip" style="left:2141px;top:233px;width:200px;height:88px">
<div class="t hd" style="left:-100.4px;width:400px;text-align:center;top:8.71px;height:34px;line-height:34px;font-size:26.8px;color:#000">Aufbau manuell</div>
<div class="t hd" style="left:-100.4px;width:400px;text-align:center;top:52.56px;height:34px;line-height:34px;font-size:26.8px;color:#000">AUFBAUM</div>
</div>
<div class="clip" style="left:2343px;top:233px;width:200px;height:88px">
<div class="t hd" style="left:-100.4px;width:400px;text-align:center;top:8.71px;height:34px;line-height:34px;font-size:26.8px;color:#000">Abbau manuell</div>
<div class="t hd" style="left:-100.4px;width:400px;text-align:center;top:52.56px;height:34px;line-height:34px;font-size:26.8px;color:#000">ABBAUM</div>
</div>
<div class="clip" style="left:2545px;top:233px;width:232px;height:88px">
<div class="t hd" style="left:-100.4px;width:432px;text-align:center;top:8.71px;height:34px;line-height:34px;font-size:26.8px;color:#333">Gesamtbewegung</div>
<div class="t hd" style="left:-100.4px;width:432px;text-align:center;top:52.56px;height:34px;line-height:34px;font-size:26.8px;color:#333">BW_0</div>
</div>
<div class="clip" style="left:2779px;top:233px;width:200px;height:88px">
<div class="t hd" style="left:-100.4px;width:400px;text-align:center;top:8.71px;height:34px;line-height:34px;font-size:26.8px;color:#000">Umsatzsteuer %</div>
<div class="t hd" style="left:-100.4px;width:400px;text-align:center;top:52.56px;height:34px;line-height:34px;font-size:26.8px;color:#000">UST</div>
</div>
<div class="clip" style="left:2981px;top:233px;width:200px;height:88px">
<div class="t hd" style="left:-100.4px;width:400px;text-align:center;top:8.71px;height:34px;line-height:34px;font-size:26.8px;color:#000">Endbestand</div>
<div class="t hd" style="left:-100.4px;width:400px;text-align:center;top:52.56px;height:34px;line-height:34px;font-size:26.8px;color:#000">EB_0</div>
</div>
<div class="t rh" style="top:330.91px;height:35px;line-height:35px;font-size:26.8px;color:#808080;right:2513.40px;text-align:right;">2022</div>
<div class="t rh" style="top:330.91px;height:35px;line-height:35px;font-size:26.8px;color:#808080;right:2451.00px;text-align:right;">12</div>
<div class="t " style="top:328.31px;height:36px;line-height:36px;font-size:27.1px;color:#000;left:944.20px;">IST</div>
<div class="t " style="top:328.91px;height:35px;line-height:35px;font-size:26.8px;color:#333;right:2260.00px;text-align:right;">12</div>
<div class="t " style="top:328.91px;height:35px;line-height:35px;font-size:26.8px;color:#333;right:2058.00px;text-align:right;">0</div>
<div class="t " style="top:331.91px;height:35px;line-height:35px;font-size:26.8px;color:#000;right:207.40px;text-align:right;">0</div>
<div class="t rh" style="top:374.81px;height:35px;line-height:35px;font-size:26.8px;color:#808080;right:2513.40px;text-align:right;">2023</div>
<div class="t rh" style="top:374.81px;height:35px;line-height:35px;font-size:26.8px;color:#808080;right:2451.00px;text-align:right;">1</div>
<div class="t " style="top:372.21px;height:36px;line-height:36px;font-size:27.1px;color:#000;left:944.20px;">IST</div>
<div class="t " style="top:372.81px;height:35px;line-height:35px;font-size:26.8px;color:#333;right:2260.00px;text-align:right;">1</div>
<div class="t " style="top:372.81px;height:35px;line-height:35px;font-size:26.8px;color:#333;right:2058.00px;text-align:right;">0</div>
<div class="t " style="top:375.81px;height:35px;line-height:35px;font-size:26.8px;color:#000;right:207.40px;text-align:right;">0</div>
<div class="t rh" style="top:419.24px;height:35px;line-height:35px;font-size:26.8px;color:#808080;right:2513.40px;text-align:right;">2023</div>
<div class="t rh" style="top:419.24px;height:35px;line-height:35px;font-size:26.8px;color:#808080;right:2451.00px;text-align:right;">2</div>
<div class="t " style="top:416.64px;height:36px;line-height:36px;font-size:27.1px;color:#000;left:944.20px;">IST</div>
<div class="t " style="top:417.24px;height:35px;line-height:35px;font-size:26.8px;color:#333;right:2260.00px;text-align:right;">2</div>
<div class="t " style="top:417.24px;height:35px;line-height:35px;font-size:26.8px;color:#333;right:2058.00px;text-align:right;">0</div>
<div class="t " style="top:420.24px;height:35px;line-height:35px;font-size:26.8px;color:#000;right:207.40px;text-align:right;">0</div>
<div class="t rh" style="top:463.67px;height:35px;line-height:35px;font-size:26.8px;color:#808080;right:2513.40px;text-align:right;">2023</div>
<div class="t rh" style="top:463.67px;height:35px;line-height:35px;font-size:26.8px;color:#808080;right:2451.00px;text-align:right;">3</div>
<div class="t " style="top:461.07px;height:36px;line-height:36px;font-size:27.1px;color:#000;left:944.20px;">IST</div>
<div class="t " style="top:461.67px;height:35px;line-height:35px;font-size:26.8px;color:#333;right:2260.00px;text-align:right;">3</div>
<div class="t " style="top:461.67px;height:35px;line-height:35px;font-size:26.8px;color:#333;right:2058.00px;text-align:right;">0</div>
<div class="t " style="top:464.67px;height:35px;line-height:35px;font-size:26.8px;color:#000;right:207.40px;text-align:right;">0</div>
<div class="t rh" style="top:508.10px;height:35px;line-height:35px;font-size:26.8px;color:#808080;right:2513.40px;text-align:right;">2023</div>
<div class="t rh" style="top:508.10px;height:35px;line-height:35px;font-size:26.8px;color:#808080;right:2451.00px;text-align:right;">4</div>
<div class="t " style="top:505.50px;height:36px;line-height:36px;font-size:27.1px;color:#000;left:944.20px;">IST</div>
<div class="t " style="top:506.10px;height:35px;line-height:35px;font-size:26.8px;color:#333;right:2260.00px;text-align:right;">4</div>
<div class="t " style="top:506.10px;height:35px;line-height:35px;font-size:26.8px;color:#333;right:2058.00px;text-align:right;">0</div>
<div class="t " style="top:509.10px;height:35px;line-height:35px;font-size:26.8px;color:#000;right:207.40px;text-align:right;">0</div>
<div class="t rh" style="top:552.53px;height:35px;line-height:35px;font-size:26.8px;color:#808080;right:2513.40px;text-align:right;">2023</div>
<div class="t rh" style="top:552.53px;height:35px;line-height:35px;font-size:26.8px;color:#808080;right:2451.00px;text-align:right;">5</div>
<div class="t " style="top:549.93px;height:36px;line-height:36px;font-size:27.1px;color:#000;left:944.20px;">IST</div>
<div class="t " style="top:550.53px;height:35px;line-height:35px;font-size:26.8px;color:#333;right:2260.00px;text-align:right;">5</div>
<div class="t " style="top:550.53px;height:35px;line-height:35px;font-size:26.8px;color:#333;right:2058.00px;text-align:right;">0</div>
<div class="t " style="top:553.53px;height:35px;line-height:35px;font-size:26.8px;color:#000;right:207.40px;text-align:right;">0</div>
<div class="t rh" style="top:596.96px;height:35px;line-height:35px;font-size:26.8px;color:#808080;right:2513.40px;text-align:right;">2023</div>
<div class="t rh" style="top:596.96px;height:35px;line-height:35px;font-size:26.8px;color:#808080;right:2451.00px;text-align:right;">6</div>
<div class="t " style="top:594.36px;height:36px;line-height:36px;font-size:27.1px;color:#000;left:944.20px;">IST</div>
<div class="t " style="top:594.96px;height:35px;line-height:35px;font-size:26.8px;color:#333;right:2260.00px;text-align:right;">6</div>
<div class="t " style="top:594.96px;height:35px;line-height:35px;font-size:26.8px;color:#333;right:2058.00px;text-align:right;">0</div>
<div class="t " style="top:597.96px;height:35px;line-height:35px;font-size:26.8px;color:#000;right:207.40px;text-align:right;">0</div>
<div class="t rh" style="top:641.39px;height:35px;line-height:35px;font-size:26.8px;color:#808080;right:2513.40px;text-align:right;">2023</div>
<div class="t rh" style="top:641.39px;height:35px;line-height:35px;font-size:26.8px;color:#808080;right:2451.00px;text-align:right;">7</div>
<div class="t " style="top:638.79px;height:36px;line-height:36px;font-size:27.1px;color:#000;left:944.20px;">IST</div>
<div class="t " style="top:639.39px;height:35px;line-height:35px;font-size:26.8px;color:#333;right:2260.00px;text-align:right;">7</div>
<div class="t " style="top:639.39px;height:35px;line-height:35px;font-size:26.8px;color:#333;right:2058.00px;text-align:right;">0</div>
<div class="t " style="top:642.39px;height:35px;line-height:35px;font-size:26.8px;color:#000;right:207.40px;text-align:right;">0</div>
<div class="t rh" style="top:685.82px;height:35px;line-height:35px;font-size:26.8px;color:#808080;right:2513.40px;text-align:right;">2023</div>
<div class="t rh" style="top:685.82px;height:35px;line-height:35px;font-size:26.8px;color:#808080;right:2451.00px;text-align:right;">8</div>
<div class="t " style="top:683.22px;height:36px;line-height:36px;font-size:27.1px;color:#000;left:944.20px;">IST</div>
<div class="t " style="top:683.82px;height:35px;line-height:35px;font-size:26.8px;color:#333;right:2260.00px;text-align:right;">8</div>
<div class="t " style="top:683.82px;height:35px;line-height:35px;font-size:26.8px;color:#333;right:2058.00px;text-align:right;">0</div>
<div class="t " style="top:686.82px;height:35px;line-height:35px;font-size:26.8px;color:#000;right:207.40px;text-align:right;">0</div>
<div class="t rh" style="top:730.25px;height:35px;line-height:35px;font-size:26.8px;color:#808080;right:2513.40px;text-align:right;">2023</div>
<div class="t rh" style="top:730.25px;height:35px;line-height:35px;font-size:26.8px;color:#808080;right:2451.00px;text-align:right;">9</div>
<div class="t " style="top:727.65px;height:36px;line-height:36px;font-size:27.1px;color:#000;left:944.20px;">IST</div>
<div class="t " style="top:728.25px;height:35px;line-height:35px;font-size:26.8px;color:#333;right:2260.00px;text-align:right;">9</div>
<div class="t " style="top:728.25px;height:35px;line-height:35px;font-size:26.8px;color:#333;right:2058.00px;text-align:right;">0</div>
<div class="t " style="top:731.25px;height:35px;line-height:35px;font-size:26.8px;color:#000;right:207.40px;text-align:right;">0</div>
<div class="t rh" style="top:774.68px;height:35px;line-height:35px;font-size:26.8px;color:#808080;right:2513.40px;text-align:right;">2023</div>
<div class="t rh" style="top:774.68px;height:35px;line-height:35px;font-size:26.8px;color:#808080;right:2451.00px;text-align:right;">10</div>
<div class="t " style="top:772.08px;height:36px;line-height:36px;font-size:27.1px;color:#000;left:944.20px;">IST</div>
<div class="t " style="top:772.68px;height:35px;line-height:35px;font-size:26.8px;color:#333;right:2260.00px;text-align:right;">10</div>
<div class="t " style="top:772.68px;height:35px;line-height:35px;font-size:26.8px;color:#333;right:2058.00px;text-align:right;">0</div>
<div class="t " style="top:775.68px;height:35px;line-height:35px;font-size:26.8px;color:#000;right:207.40px;text-align:right;">0</div>
<div class="t rh" style="top:819.11px;height:35px;line-height:35px;font-size:26.8px;color:#808080;right:2513.40px;text-align:right;">2023</div>
<div class="t rh" style="top:819.11px;height:35px;line-height:35px;font-size:26.8px;color:#808080;right:2451.00px;text-align:right;">11</div>
<div class="t " style="top:816.51px;height:36px;line-height:36px;font-size:27.1px;color:#000;left:944.20px;">IST</div>
<div class="t " style="top:817.11px;height:35px;line-height:35px;font-size:26.8px;color:#333;right:2260.00px;text-align:right;">11</div>
<div class="t " style="top:817.11px;height:35px;line-height:35px;font-size:26.8px;color:#333;right:2058.00px;text-align:right;">0</div>
<div class="t " style="top:820.11px;height:35px;line-height:35px;font-size:26.8px;color:#000;right:207.40px;text-align:right;">0</div>
<div class="t rh" style="top:863.54px;height:35px;line-height:35px;font-size:26.8px;color:#808080;right:2513.40px;text-align:right;">2023</div>
<div class="t rh" style="top:863.54px;height:35px;line-height:35px;font-size:26.8px;color:#808080;right:2451.00px;text-align:right;">12</div>
<div class="t " style="top:860.94px;height:36px;line-height:36px;font-size:27.1px;color:#000;left:944.20px;">IST</div>
<div class="t " style="top:861.54px;height:35px;line-height:35px;font-size:26.8px;color:#333;right:2260.00px;text-align:right;">12</div>
<div class="t " style="top:861.54px;height:35px;line-height:35px;font-size:26.8px;color:#333;right:2058.00px;text-align:right;">0</div>
<div class="t " style="top:864.54px;height:35px;line-height:35px;font-size:26.8px;color:#000;right:207.40px;text-align:right;">0</div>
<div class="t rh" style="top:907.97px;height:35px;line-height:35px;font-size:26.8px;color:#808080;right:2513.40px;text-align:right;">2024</div>
<div class="t rh" style="top:907.97px;height:35px;line-height:35px;font-size:26.8px;color:#808080;right:2451.00px;text-align:right;">1</div>
<div class="t " style="top:905.37px;height:36px;line-height:36px;font-size:27.1px;color:#000;left:944.20px;">IST</div>
<div class="t " style="top:905.97px;height:35px;line-height:35px;font-size:26.8px;color:#333;right:2260.00px;text-align:right;">1</div>
<div class="t " style="top:905.97px;height:35px;line-height:35px;font-size:26.8px;color:#333;right:2058.00px;text-align:right;">0</div>
<div class="t " style="top:908.97px;height:35px;line-height:35px;font-size:26.8px;color:#000;right:207.40px;text-align:right;">0</div>
<div class="t rh" style="top:952.40px;height:35px;line-height:35px;font-size:26.8px;color:#808080;right:2513.40px;text-align:right;">2024</div>
<div class="t rh" style="top:952.40px;height:35px;line-height:35px;font-size:26.8px;color:#808080;right:2451.00px;text-align:right;">2</div>
<div class="t " style="top:949.80px;height:36px;line-height:36px;font-size:27.1px;color:#000;left:944.20px;">IST</div>
<div class="t " style="top:950.40px;height:35px;line-height:35px;font-size:26.8px;color:#333;right:2260.00px;text-align:right;">2</div>
<div class="t " style="top:950.40px;height:35px;line-height:35px;font-size:26.8px;color:#333;right:2058.00px;text-align:right;">0</div>
<div class="t " style="top:953.40px;height:35px;line-height:35px;font-size:26.8px;color:#000;right:207.40px;text-align:right;">0</div>
<div class="t rh" style="top:996.83px;height:35px;line-height:35px;font-size:26.8px;color:#808080;right:2513.40px;text-align:right;">2024</div>
<div class="t rh" style="top:996.83px;height:35px;line-height:35px;font-size:26.8px;color:#808080;right:2451.00px;text-align:right;">3</div>
<div class="t " style="top:994.23px;height:36px;line-height:36px;font-size:27.1px;color:#000;left:944.20px;">IST</div>
<div class="t " style="top:994.83px;height:35px;line-height:35px;font-size:26.8px;color:#333;right:2260.00px;text-align:right;">3</div>
<div class="t " style="top:994.83px;height:35px;line-height:35px;font-size:26.8px;color:#333;right:2058.00px;text-align:right;">0</div>
<div class="t " style="top:997.83px;height:35px;line-height:35px;font-size:26.8px;color:#000;right:207.40px;text-align:right;">0</div>
<div class="t rh" style="top:1041.26px;height:35px;line-height:35px;font-size:26.8px;color:#808080;right:2513.40px;text-align:right;">2024</div>
<div class="t rh" style="top:1041.26px;height:35px;line-height:35px;font-size:26.8px;color:#808080;right:2451.00px;text-align:right;">4</div>
<div class="t " style="top:1038.66px;height:36px;line-height:36px;font-size:27.1px;color:#000;left:944.20px;">IST</div>
<div class="t " style="top:1039.26px;height:35px;line-height:35px;font-size:26.8px;color:#333;right:2260.00px;text-align:right;">4</div>
<div class="t " style="top:1039.26px;height:35px;line-height:35px;font-size:26.8px;color:#333;right:2058.00px;text-align:right;">0</div>
<div class="t " style="top:1042.26px;height:35px;line-height:35px;font-size:26.8px;color:#000;right:207.40px;text-align:right;">0</div>
<div class="t rh" style="top:1085.69px;height:35px;line-height:35px;font-size:26.8px;color:#808080;right:2513.40px;text-align:right;">2024</div>
<div class="t rh" style="top:1085.69px;height:35px;line-height:35px;font-size:26.8px;color:#808080;right:2451.00px;text-align:right;">5</div>
<div class="t " style="top:1083.09px;height:36px;line-height:36px;font-size:27.1px;color:#000;left:944.20px;">PLAN</div>
<div class="t " style="top:1083.69px;height:35px;line-height:35px;font-size:26.8px;color:#333;right:2260.00px;text-align:right;">5</div>
<div class="t " style="top:1083.69px;height:35px;line-height:35px;font-size:26.8px;color:#333;right:2058.00px;text-align:right;">0</div>
<div class="t " style="top:1086.69px;height:35px;line-height:35px;font-size:26.8px;color:#000;right:207.40px;text-align:right;">0</div>
<div class="t " style="top:1083.69px;height:35px;line-height:35px;font-size:26.8px;color:#333;right:1249.00px;text-align:right;">500</div>
<div class="t " style="top:1086.69px;height:35px;line-height:35px;font-size:26.8px;color:#000;right:1047.40px;text-align:right;">500</div>
<div class="t " style="top:1083.69px;height:35px;line-height:35px;font-size:26.8px;color:#333;right:611.00px;text-align:right;">0</div>
<div class="t rh" style="top:1130.12px;height:35px;line-height:35px;font-size:26.8px;color:#808080;right:2513.40px;text-align:right;">2024</div>
<div class="t rh" style="top:1130.12px;height:35px;line-height:35px;font-size:26.8px;color:#808080;right:2451.00px;text-align:right;">6</div>
<div class="t " style="top:1127.52px;height:36px;line-height:36px;font-size:27.1px;color:#000;left:944.20px;">PLAN</div>
<div class="t " style="top:1128.12px;height:35px;line-height:35px;font-size:26.8px;color:#333;right:2260.00px;text-align:right;">6</div>
<div class="t " style="top:1128.12px;height:35px;line-height:35px;font-size:26.8px;color:#333;right:2058.00px;text-align:right;">0</div>
<div class="t " style="top:1131.12px;height:35px;line-height:35px;font-size:26.8px;color:#000;right:207.40px;text-align:right;">0</div>
<div class="t rh" style="top:1174.55px;height:35px;line-height:35px;font-size:26.8px;color:#808080;right:2513.40px;text-align:right;">2024</div>
<div class="t rh" style="top:1174.55px;height:35px;line-height:35px;font-size:26.8px;color:#808080;right:2451.00px;text-align:right;">7</div>
<div class="t " style="top:1171.95px;height:36px;line-height:36px;font-size:27.1px;color:#000;left:944.20px;">PLAN</div>
<div class="t " style="top:1172.55px;height:35px;line-height:35px;font-size:26.8px;color:#333;right:2260.00px;text-align:right;">7</div>
<div class="t " style="top:1172.55px;height:35px;line-height:35px;font-size:26.8px;color:#333;right:2058.00px;text-align:right;">0</div>
<div class="t " style="top:1175.55px;height:35px;line-height:35px;font-size:26.8px;color:#000;right:207.40px;text-align:right;">0</div>
<div class="t rh" style="top:1218.98px;height:35px;line-height:35px;font-size:26.8px;color:#808080;right:2513.40px;text-align:right;">2024</div>
<div class="t rh" style="top:1218.98px;height:35px;line-height:35px;font-size:26.8px;color:#808080;right:2451.00px;text-align:right;">8</div>
<div class="t " style="top:1216.38px;height:36px;line-height:36px;font-size:27.1px;color:#000;left:944.20px;">PLAN</div>
<div class="t " style="top:1216.98px;height:35px;line-height:35px;font-size:26.8px;color:#333;right:2260.00px;text-align:right;">8</div>
<div class="t " style="top:1216.98px;height:35px;line-height:35px;font-size:26.8px;color:#333;right:2058.00px;text-align:right;">0</div>
<div class="t " style="top:1219.98px;height:35px;line-height:35px;font-size:26.8px;color:#000;right:207.40px;text-align:right;">0</div>
<div class="t rh" style="top:1263.41px;height:35px;line-height:35px;font-size:26.8px;color:#808080;right:2513.40px;text-align:right;">2024</div>
<div class="t rh" style="top:1263.41px;height:35px;line-height:35px;font-size:26.8px;color:#808080;right:2451.00px;text-align:right;">9</div>
<div class="t " style="top:1260.81px;height:36px;line-height:36px;font-size:27.1px;color:#000;left:944.20px;">PLAN</div>
<div class="t " style="top:1261.41px;height:35px;line-height:35px;font-size:26.8px;color:#333;right:2260.00px;text-align:right;">9</div>
<div class="t " style="top:1261.41px;height:35px;line-height:35px;font-size:26.8px;color:#333;right:2058.00px;text-align:right;">0</div>
<div class="t " style="top:1264.41px;height:35px;line-height:35px;font-size:26.8px;color:#000;right:207.40px;text-align:right;">0</div>
<div class="t rh" style="top:1307.84px;height:35px;line-height:35px;font-size:26.8px;color:#808080;right:2513.40px;text-align:right;">2024</div>
<div class="t rh" style="top:1307.84px;height:35px;line-height:35px;font-size:26.8px;color:#808080;right:2451.00px;text-align:right;">10</div>
<div class="t " style="top:1305.24px;height:36px;line-height:36px;font-size:27.1px;color:#000;left:944.20px;">PLAN</div>
<div class="t " style="top:1305.84px;height:35px;line-height:35px;font-size:26.8px;color:#333;right:2260.00px;text-align:right;">10</div>
<div class="t " style="top:1305.84px;height:35px;line-height:35px;font-size:26.8px;color:#333;right:2058.00px;text-align:right;">0</div>
<div class="t " style="top:1308.84px;height:35px;line-height:35px;font-size:26.8px;color:#000;right:207.40px;text-align:right;">0</div>
<div class="t rh" style="top:1352.27px;height:35px;line-height:35px;font-size:26.8px;color:#808080;right:2513.40px;text-align:right;">2024</div>
<div class="t rh" style="top:1352.27px;height:35px;line-height:35px;font-size:26.8px;color:#808080;right:2451.00px;text-align:right;">11</div>
<div class="t " style="top:1349.67px;height:36px;line-height:36px;font-size:27.1px;color:#000;left:944.20px;">PLAN</div>
<div class="t " style="top:1350.27px;height:35px;line-height:35px;font-size:26.8px;color:#333;right:2260.00px;text-align:right;">11</div>
<div class="t " style="top:1350.27px;height:35px;line-height:35px;font-size:26.8px;color:#333;right:2058.00px;text-align:right;">0</div>
<div class="t " style="top:1353.27px;height:35px;line-height:35px;font-size:26.8px;color:#000;right:207.40px;text-align:right;">0</div>
<div class="t rh" style="top:1396.70px;height:35px;line-height:35px;font-size:26.8px;color:#808080;right:2513.40px;text-align:right;">2024</div>
<div class="t rh" style="top:1396.70px;height:35px;line-height:35px;font-size:26.8px;color:#808080;right:2451.00px;text-align:right;">12</div>
<div class="t " style="top:1394.10px;height:36px;line-height:36px;font-size:27.1px;color:#000;left:944.20px;">PLAN</div>
<div class="t " style="top:1394.70px;height:35px;line-height:35px;font-size:26.8px;color:#333;right:2260.00px;text-align:right;">12</div>
<div class="t " style="top:1394.70px;height:35px;line-height:35px;font-size:26.8px;color:#333;right:2058.00px;text-align:right;">0</div>
<div class="t " style="top:1397.70px;height:35px;line-height:35px;font-size:26.8px;color:#000;right:207.40px;text-align:right;">0</div>
<div class="t rh" style="top:1441.13px;height:35px;line-height:35px;font-size:26.8px;color:#808080;right:2513.40px;text-align:right;">2025</div>
<div class="t rh" style="top:1441.13px;height:35px;line-height:35px;font-size:26.8px;color:#808080;right:2451.00px;text-align:right;">1</div>
<div class="t " style="top:1438.53px;height:36px;line-height:36px;font-size:27.1px;color:#000;left:944.20px;">PLAN</div>
<div class="t " style="top:1439.13px;height:35px;line-height:35px;font-size:26.8px;color:#333;right:2260.00px;text-align:right;">1</div>
<div class="t " style="top:1439.13px;height:35px;line-height:35px;font-size:26.8px;color:#333;right:2058.00px;text-align:right;">0</div>
<div class="t " style="top:1442.13px;height:35px;line-height:35px;font-size:26.8px;color:#000;right:207.40px;text-align:right;">0</div>
<div class="t rh" style="top:1485.56px;height:35px;line-height:35px;font-size:26.8px;color:#808080;right:2513.40px;text-align:right;">2025</div>
<div class="t rh" style="top:1485.56px;height:35px;line-height:35px;font-size:26.8px;color:#808080;right:2451.00px;text-align:right;">2</div>
<div class="t " style="top:1482.96px;height:36px;line-height:36px;font-size:27.1px;color:#000;left:944.20px;">PLAN</div>
<div class="t " style="top:1483.56px;height:35px;line-height:35px;font-size:26.8px;color:#333;right:2260.00px;text-align:right;">2</div>
<div class="t " style="top:1483.56px;height:35px;line-height:35px;font-size:26.8px;color:#333;right:2058.00px;text-align:right;">0</div>
<div class="t " style="top:1486.56px;height:35px;line-height:35px;font-size:26.8px;color:#000;right:207.40px;text-align:right;">0</div>
<div class="t rh" style="top:1529.99px;height:35px;line-height:35px;font-size:26.8px;color:#808080;right:2513.40px;text-align:right;">2025</div>
<div class="t rh" style="top:1529.99px;height:35px;line-height:35px;font-size:26.8px;color:#808080;right:2451.00px;text-align:right;">3</div>
<div class="t " style="top:1527.39px;height:36px;line-height:36px;font-size:27.1px;color:#000;left:944.20px;">PLAN</div>
<div class="t " style="top:1527.99px;height:35px;line-height:35px;font-size:26.8px;color:#333;right:2260.00px;text-align:right;">3</div>
<div class="t " style="top:1527.99px;height:35px;line-height:35px;font-size:26.8px;color:#333;right:2058.00px;text-align:right;">0</div>
<div class="t " style="top:1530.99px;height:35px;line-height:35px;font-size:26.8px;color:#000;right:207.40px;text-align:right;">0</div>
<svg class="r" style="left:2080px;top:950px" width="240" height="160" viewBox="2080 950 240 160">
<path d="M2263 1077 L2263 1012 Q2263 990 2240 987.8 L2204 985.8 L2184 983.8 Q2166 982.3 2155 991.5 Q2142 1004 2137.5 1027 L2131.5 1061" fill="none" stroke="#E41B1C" stroke-width="11.8" stroke-linecap="round" stroke-linejoin="round"/>
<path d="M2112.8 1035 L2131.4 1062 L2146.6 1045.8" fill="none" stroke="#E41B1C" stroke-width="11.8" stroke-linecap="round" stroke-linejoin="round"/>
</svg>
</div></body></html>
